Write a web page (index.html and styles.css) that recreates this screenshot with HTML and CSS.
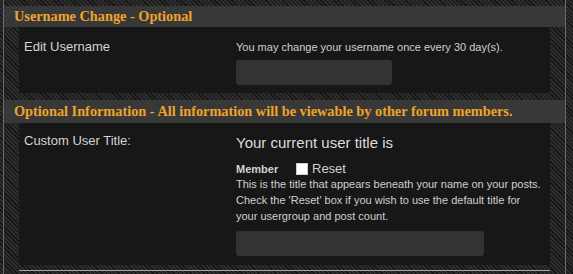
FILE: index.html
```html
<!DOCTYPE html>
<html lang="en">
<head>
    <meta charset="UTF-8">
    <title>Edit Profile</title>
    <link rel="stylesheet" href="styles.css">
</head>
<body>
    <div class="page">
        <h3 class="block-head">Username Change - Optional</h3>
        <div class="block-body">
            <div class="row first">
                <label class="row-label">Edit Username</label>
                <div class="row-field">
                    <p class="desc">You may change your username once every 30 day(s).</p>
                    <input type="text" class="text-box short">
                </div>
            </div>
        </div>

        <h3 class="block-head second">Optional Information - All information will be viewable by other forum members.</h3>
        <div class="block-body">
            <div class="row">
                <label class="row-label">Custom User Title:</label>
                <div class="row-field">
                    <div class="current-title">Your current user title is</div>
                    <div class="title-line">
                        <strong>Member</strong>
                        <input type="checkbox" class="reset-box" id="resetTitle">
                        <label for="resetTitle" class="reset-label">Reset</label>
                    </div>
                    <p class="desc">This is the title that appears beneath your name on your posts.<br>
                    Check the 'Reset' box if you wish to use the default title for<br>
                    your usergroup and post count.</p>
                    <input type="text" class="text-box long">
                </div>
            </div>
        </div>
        <div class="block-foot"></div>
    </div>
</body>
</html>
```

FILE: styles.css
```css
body {
    margin: 0;
    height: 274px;
    overflow: hidden;
    font-family: "Liberation Sans", Arial, sans-serif;
    color: #d2d2d2;
    background: repeating-linear-gradient(45deg, #141414 0 1px, #2c2c2c 1px 3px);
}
.page {
    margin-left: 3px;
    width: 563px;
    height: 274px;
    border-left: 1px solid #6a6a6a;
    border-right: 1px solid #6a6a6a;
    padding-top: 6px;
    box-sizing: border-box;
}
.block-head {
    margin: 0;
    height: 21px;
    line-height: 21px;
    padding-left: 10px;
    background-color: #383838;
    color: #eea42a;
    font-family: "Liberation Serif", "Times New Roman", serif;
    font-size: 14.3px;
    font-weight: bold;
    white-space: nowrap;
}
.block-head.second {
    margin-top: 7px;
    height: 23px;
    line-height: 23px;
}
.block-body {
    margin: 0 15px;
    background-color: #171717;
}
.row {
    display: grid;
    grid-template-columns: 212px 1fr;
    padding: 10px 5px 9px;
}
.row.first {
    padding: 12px 5px 8px;
}
.row-label {
    font-size: 13px;
    line-height: 16px;
    color: #d4d4d4;
}
.desc {
    margin: 0;
    font-size: 11px;
    line-height: 16px;
    color: #cfcfcf;
}
.text-box {
    display: block;
    height: 25px;
    margin: 5px 0 0;
    padding: 0;
    border: none;
    border-radius: 3px;
    background-color: #333;
}
.text-box.short {
    width: 156px;
}
.text-box.long {
    width: 248px;
    margin-top: 7px;
}
.current-title {
    margin-top: 1px;
    font-size: 15px;
    line-height: 18px;
    color: #dcdcdc;
}
.title-line {
    display: flex;
    align-items: center;
    margin-top: 9px;
    height: 15px;
    font-size: 11px;
}
.title-line strong {
    width: 60px;
}
.reset-box {
    appearance: none;
    width: 12px;
    height: 12px;
    margin: 0 4px 0 0;
    background-color: #fff;
    border: 1px solid #ccc;
    box-sizing: border-box;
}
.reset-label {
    font-size: 13px;
}
.block-foot {
    margin: 5px 15px 0;
    border-top: 1px solid #a8a8a8;
}
```
